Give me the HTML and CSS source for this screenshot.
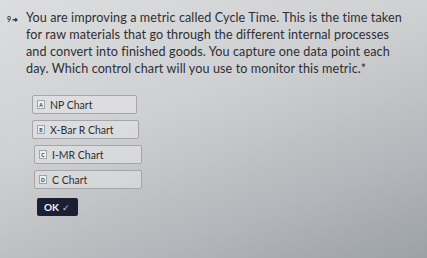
FILE: index.html
```html
<!DOCTYPE html>
<html>
<head>
    <title>Question 9</title>
    <link rel="stylesheet" href="styles.css">
</head>
<body>
    <div class="page">
        <div class="question">
            <div class="number">9<span class="arrow">&#10140;</span></div>
            <div class="text">You are improving a metric called Cycle Time. This is the time taken for raw materials that go through the different internal processes and convert into finished goods. You capture one data point each day. Which control chart will you use to monitor this metric.*</div>
        </div>

        <div class="choices">
            <div class="choice"><span class="key">A</span>NP Chart</div>
            <div class="choice"><span class="key">B</span>X-Bar R Chart</div>
            <div class="choice"><span class="key">C</span>I-MR Chart</div>
            <div class="choice"><span class="key">D</span>C Chart</div>
        </div>

        <div class="ok">OK <span class="tick">&#10003;</span></div>
    </div>
</body>
</html>
```

FILE: styles.css
```css
/* Typeform style question */
body, html {
    height: 100%;
    margin: 0;
}

body {
    font-family: Lato, "Noto Sans", sans-serif;
    color: #2e2f33;
    background: linear-gradient(160deg, #dcddde 0%, #cfd0d2 40%, #b3b6ba 75%, #9ca1a8 100%);
}

.page {
    padding: 9px 10px 0 7px;
}

.question {
    display: flex;
    align-items: flex-start;
}

.number {
    width: 19px;
    flex: none;
    font-size: 7px;
    font-weight: 700;
    padding-top: 6px;
}

.arrow {
    font-size: 7px;
    margin-left: 1px;
}

.text {
    max-width: 382px;
    font-size: 12.6px;
    line-height: 17px;
    letter-spacing: 0.1px;
}

.choices {
    margin: 18px 0 0 25px;
    display: flex;
    flex-direction: column;
    gap: 6px;
}

.choice {
    display: flex;
    align-items: center;
    width: 105px;
    height: 19px;
    box-sizing: border-box;
    border: 1px solid #a4a6a9;
    border-radius: 2px;
    background: rgba(235, 236, 237, 0.45);
    font-size: 10.5px;
    padding-left: 4px;
}

.choice:nth-child(2) { width: 107px; }
.choice:nth-child(3), .choice:nth-child(4) { width: 108px; margin-left: 2px; }

.key {
    display: inline-flex;
    align-items: center;
    justify-content: center;
    width: 8px;
    height: 9px;
    box-sizing: border-box;
    border: 1px solid #a2a4a8;
    background: #eeeeef;
    font-size: 5px;
    font-weight: 700;
    margin-right: 5px;
}

.ok {
    margin: 9px 0 0 30px;
    width: 41px;
    height: 18px;
    box-sizing: border-box;
    background: #1c1f33;
    color: #f2f2f5;
    border-radius: 2px;
    font-size: 10px;
    font-weight: 700;
    display: flex;
    align-items: center;
    padding-left: 7px;
}

.tick {
    font-weight: 400;
    font-size: 9px;
    margin-left: 3px;
    color: #c9cbd6;
}
```
